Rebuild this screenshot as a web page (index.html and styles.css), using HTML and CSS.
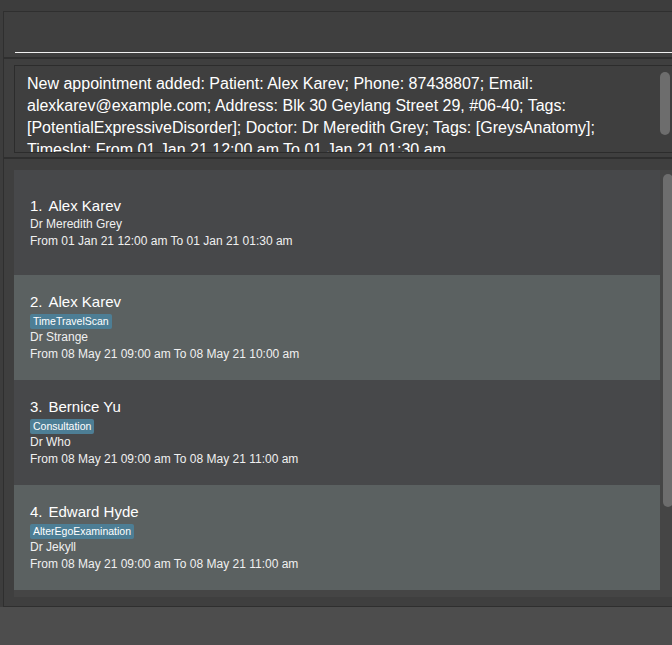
FILE: index.html
```html
<!DOCTYPE html>
<html>
<head>
<meta charset="utf-8">
<link rel="stylesheet" href="styles.css">
</head>
<body>
<div class="window">
  <div class="pane cmd-pane">
    <div class="cmd-field"></div>
  </div>
  <div class="pane result-pane">
    <div class="result-box">
      <p class="result-text">New appointment added: Patient: Alex Karev; Phone: 87438807; Email: alexkarev@example.com; Address: Blk 30 Geylang Street 29, #06-40; Tags: [PotentialExpressiveDisorder]; Doctor: Dr Meredith Grey; Tags: [GreysAnatomy]; Timeslot: From 01 Jan 21 12:00 am To 01 Jan 21 01:30 am</p>
      <div class="result-scroll"><div class="result-thumb"></div></div>
    </div>
  </div>
  <div class="pane list-pane">
    <div class="list">
      <div class="cells">
        <div class="cell cell-even">
          <div class="name"><span class="idx">1.</span>Alex Karev</div>
          <div class="detail">Dr Meredith Grey</div>
          <div class="detail">From 01 Jan 21 12:00 am To 01 Jan 21 01:30 am</div>
        </div>
        <div class="cell cell-odd">
          <div class="name"><span class="idx">2.</span>Alex Karev</div>
          <div class="tags"><span class="tag">TimeTravelScan</span></div>
          <div class="detail">Dr Strange</div>
          <div class="detail">From 08 May 21 09:00 am To 08 May 21 10:00 am</div>
        </div>
        <div class="cell cell-even">
          <div class="name"><span class="idx">3.</span>Bernice Yu</div>
          <div class="tags"><span class="tag">Consultation</span></div>
          <div class="detail">Dr Who</div>
          <div class="detail">From 08 May 21 09:00 am To 08 May 21 11:00 am</div>
        </div>
        <div class="cell cell-odd">
          <div class="name"><span class="idx">4.</span>Edward Hyde</div>
          <div class="tags"><span class="tag">AlterEgoExamination</span></div>
          <div class="detail">Dr Jekyll</div>
          <div class="detail">From 08 May 21 09:00 am To 08 May 21 11:00 am</div>
        </div>
      </div>
      <div class="list-scroll"><div class="list-thumb"></div></div>
    </div>
  </div>
  <div class="status-bar"></div>
</div>
</body>
</html>
```

FILE: styles.css
```css
html, body {
  margin: 0;
  padding: 0;
}

body {
  width: 672px;
  height: 645px;
  overflow: hidden;
  background: #3d3d3d;
  font-family: "Liberation Sans", Arial, sans-serif;
  color: #ffffff;
}

.window {
  display: flex;
  flex-direction: column;
  height: 645px;
  padding-top: 11px;
  padding-left: 3px;
  box-sizing: border-box;
}

.pane {
  border: 1px solid #2f2f2f;
  background: #3f3f3f;
  margin-right: -12px;
}

.cmd-pane {
  height: 45px;
  padding-left: 11px;
}

.cmd-field {
  height: 40px;
  border-bottom: 1px solid #f2f2f2;
}

.result-pane {
  padding: 6px 6px 4px 10px;
}

.result-box {
  display: flex;
  height: 86px;
  border: 1px solid #2c2c2c;
  background: #3f3f3f;
  overflow: hidden;
}

.result-text {
  flex: 1;
  margin: 0;
  padding: 7px 8px 0 12px;
  font-size: 16px;
  line-height: 22px;
  color: #ffffff;
}

.result-scroll {
  width: 10px;
  padding: 6px 6px 0 0;
}

.result-thumb {
  height: 63px;
  border-radius: 5px;
  background: #6d6d6d;
}

.list-pane {
  flex: 1;
  padding: 11px 6px 9px 10px;
}

.list {
  display: flex;
  height: 100%;
  background: #454545;
}

.cells {
  flex: 1;
  display: flex;
  flex-direction: column;
}

.cell {
  height: 105px;
  display: flex;
  flex-direction: column;
  justify-content: center;
  padding-left: 16px;
}

.cell-even {
  background: #47484a;
}

.cell-odd {
  background: #5b6161;
}

.name {
  font-size: 15px;
  line-height: 20px;
  color: #ffffff;
}

.idx {
  margin-right: 6px;
}

.tags {
  display: flex;
  margin-top: 2px;
}

.tag {
  height: 15px;
  line-height: 15px;
  padding: 0 3px;
  font-size: 10.5px;
  background: #4d7e95;
  border-radius: 2px;
  color: #ffffff;
}

.detail {
  font-size: 12px;
  line-height: 17px;
  color: #f0f0f0;
}

.list-scroll {
  width: 14px;
  padding: 4px 0 0 3px;
}

.list-thumb {
  width: 10px;
  height: 333px;
  border-radius: 5px;
  background: #6d6d6d;
}

.status-bar {
  flex: none;
  height: 38px;
  margin-left: -3px;
  background: #4d4d4d;
}
```
